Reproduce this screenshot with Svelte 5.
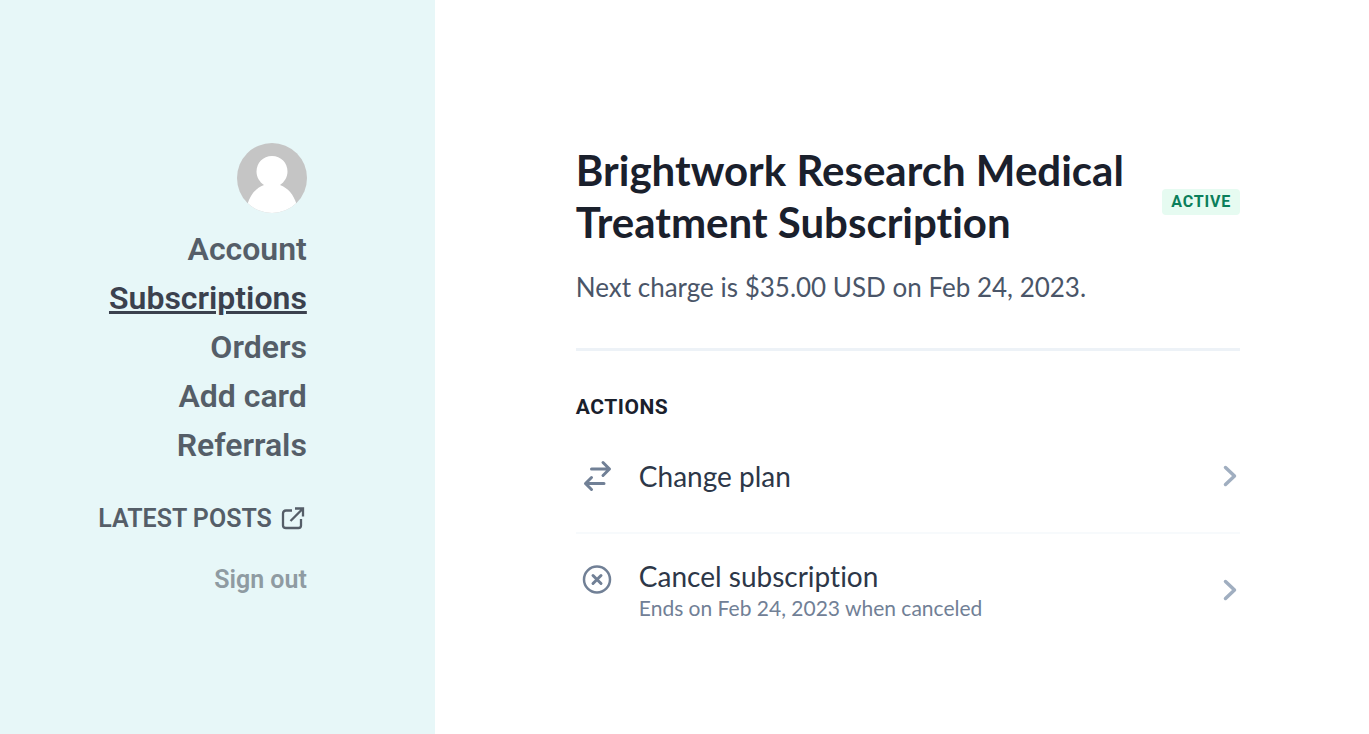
<script>
  const links = [
    { label: 'Account', href: '#account' },
    { label: 'Subscriptions', href: '#subscriptions' },
    { label: 'Orders', href: '#orders' },
    { label: 'Add card', href: '#card' },
    { label: 'Referrals', href: '#referrals' },
  ];

  const actions = [
    { icon: 'swap', label: 'Change plan' },
    { icon: 'cancel', label: 'Cancel subscription', note: 'Ends on Feb 24, 2023 when canceled' },
  ];

  let current = 'Subscriptions';
</script>

<style>
  :global(body) {
    margin: 0;
    background: #fff;
  }

  .page {
    display: grid;
    grid-template-columns: 27fr 58fr;
    min-height: 100vh;
    font-family: "Proxima Nova", Lato, sans-serif;
    font-variant-ligatures: none;
  }

  .sidebar {
    display: flex;
    flex-direction: column;
    align-items: flex-end;
    box-sizing: border-box;
    padding: 143px 128px 48px 24px;
    background: #e7f7f8;
    font-family: Roboto, sans-serif;
    font-weight: 600;
    text-align: right;
  }

  .avatar {
    display: block;
    width: 70px;
    height: 70px;
    margin-bottom: 12px;
  }

  .sidebar a {
    color: #555e68;
    text-decoration: none;
    white-space: nowrap;
  }

  nav {
    display: flex;
    flex-direction: column;
    align-items: flex-end;
    font-size: 32px;
    line-height: 49px;
  }

  nav a.current {
    color: #3b414e;
    text-decoration: underline;
    text-decoration-thickness: 3px;
  }

  .sidebar .posts {
    display: flex;
    align-items: center;
    gap: 8px;
    margin-top: 33px;
    font-size: 25px;
    line-height: 32px;
  }

  .sidebar .signout {
    margin-top: 29px;
    padding: 0;
    border: none;
    background: none;
    color: #8f9ba2;
    font: inherit;
    font-size: 25px;
    line-height: 32px;
    cursor: pointer;
  }

  main {
    box-sizing: border-box;
    padding: 144px 129px 48px 141px;
    min-width: 0;
  }

  header {
    display: flex;
    align-items: center;
    justify-content: space-between;
    gap: 24px;
  }

  h1 {
    margin: 0;
    color: #1a202c;
    font-size: 42px;
    font-weight: 700;
    line-height: 52px;
  }

  .badge {
    margin-top: 12px;
    padding: 0 9px;
    border-radius: 4px;
    background: #e6fbf1;
    color: #0b7f5b;
    font-family: Roboto, sans-serif;
    font-size: 16px;
    font-weight: 700;
    line-height: 26px;
    letter-spacing: 0.05em;
  }

  .charge {
    margin: 20px 0 0;
    padding-bottom: 41px;
    border-bottom: 3px solid #edf2f7;
    color: #4a5568;
    font-size: 26px;
    line-height: 39px;
  }

  h2 {
    margin: 40px 0 0;
    color: #1a202c;
    font-family: Roboto, sans-serif;
    font-size: 21px;
    font-weight: 700;
    line-height: 32px;
    letter-spacing: 0.025em;
  }

  ul {
    margin: 0;
    padding: 0;
    list-style: none;
  }

  li + li {
    border-top: 2px solid #f7fafc;
  }

  .action {
    display: flex;
    align-items: center;
    width: 100%;
    padding: 22px 0;
    border: none;
    background: none;
    font: inherit;
    text-align: left;
    cursor: pointer;
  }

  li:first-child .action {
    padding: 32px 0 35px;
  }

  .icon {
    flex: none;
    align-self: flex-start;
    width: 42px;
    height: 42px;
    margin-right: 21px;
    color: #718096;
  }

  .text {
    display: flex;
    flex: 1;
    flex-direction: column;
  }

  .label {
    color: #2d3748;
    font-size: 28px;
    line-height: 40px;
  }

  .note {
    margin-bottom: 4px;
    color: #718096;
    font-size: 21px;
    line-height: 24px;
  }

  .chevron {
    flex: none;
    width: 20px;
    height: 24px;
    color: #a0aec0;
  }
</style>

<div class="page">
  <aside class="sidebar">
    <svg class="avatar" viewBox="0 0 70 70" aria-hidden="true">
      <clipPath id="round"><circle cx="35" cy="35" r="35" /></clipPath>
      <g clip-path="url(#round)">
        <rect width="70" height="70" fill="#c5c5c5" />
        <path fill="#fff" d="M35 13c-9 0-15.500 7-15.500 15.500 0 5.500 3 10.500 7.500 13.500-8 3-13.500 9.500-16.500 19V70h49v-9c-3-9.500-8.500-16-16.500-19 4.500-3 7.500-8 7.500-13.500C50.500 20 44 13 35 13z" />
      </g>
    </svg>
    <nav>
      {#each links as link}
        <a href={link.href} class:current={link.label === current}>{link.label}</a>
      {/each}
    </nav>
    <a class="posts" href="#posts">
      LATEST POSTS
      <svg width="27" height="27" viewBox="0 0 27 27" fill="none" stroke="currentColor" stroke-width="2.300" aria-hidden="true">
        <path d="M12 4.500H6Q3 4.500 3 7.500V19.500Q3 22 6 22H18.500Q21 22 21 19.500V13M15 2.500H23V10.500M23 2.500L10.500 15" />
      </svg>
    </a>
    <button class="signout">Sign out</button>
  </aside>

  <main>
    <header>
      <h1>Brightwork Research Medical Treatment Subscription</h1>
      <span class="badge">ACTIVE</span>
    </header>
    <p class="charge">Next charge is $35.00 USD on Feb 24, 2023.</p>

    <h2>ACTIONS</h2>
    <ul>
      {#each actions as action}
        <li>
          <button class="action">
            <svg class="icon" viewBox="0 0 42 42" fill="none" stroke="currentColor" stroke-width="3" stroke-linecap="round" stroke-linejoin="round" aria-hidden="true">
              {#if action.icon === 'swap'}
                <path d="M15.500 14H33M27 7.500l6.500 6.500-6.500 6.500M28 28.500H9.500M15.500 22.500l-6 6 6 6" />
              {:else}
                <circle cx="21" cy="23.500" r="13" stroke-width="2.500" />
                <path d="M17 19.500l8 8M25 19.500l-8 8" />
              {/if}
            </svg>
            <span class="text">
              <span class="label">{action.label}</span>
              {#if action.note}
                <span class="note">{action.note}</span>
              {/if}
            </span>
            <svg class="chevron" viewBox="0 0 20 24" fill="none" stroke="currentColor" stroke-width="3.500" stroke-linecap="round" stroke-linejoin="round" aria-hidden="true">
              <path d="M5.500 3.500l9 8.500-9 8.500" />
            </svg>
          </button>
        </li>
      {/each}
    </ul>
  </main>
</div>
